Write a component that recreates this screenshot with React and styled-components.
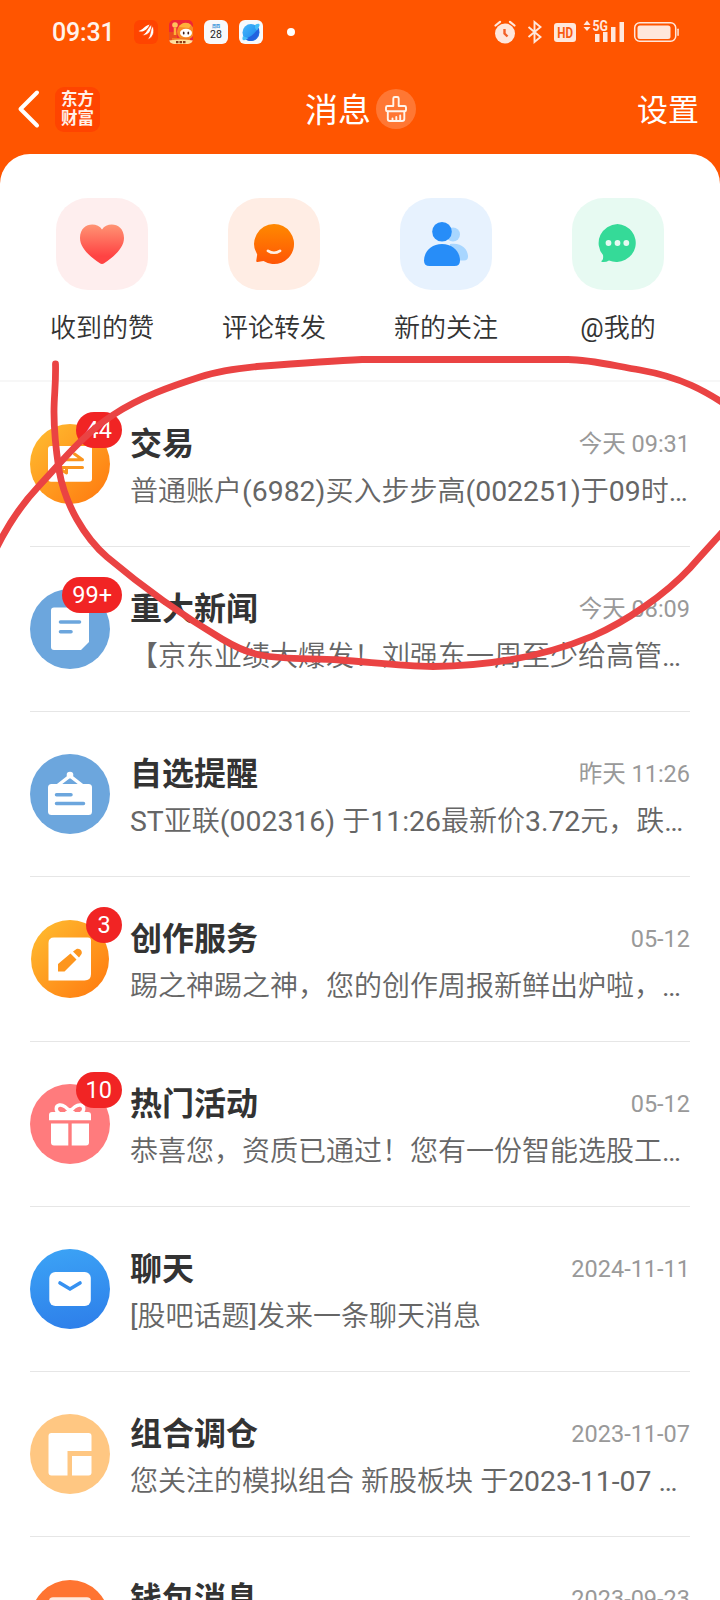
import styled, { createGlobalStyle } from "styled-components";

const shortcuts = [
  { label: "收到的赞", color: "#feeeee", icon: <HeartIcon /> },
  { label: "评论转发", color: "#ffede4", icon: <CommentIcon /> },
  { label: "新的关注", color: "#e7f2fe", icon: <PeopleIcon /> },
  { label: "@我的", color: "#e7faf2", icon: <MentionIcon /> },
];

const messages = [
  {
    title: "交易",
    date: "今天 09:31",
    text: "普通账户(6982)买入步步高(002251)于09时…",
    badge: "44",
    color: "linear-gradient(135deg, #ffb42c 15%, #ff8213 85%)",
    icon: <TradeIcon />,
  },
  {
    title: "重大新闻",
    date: "今天 08:09",
    text: "【京东业绩大爆发！刘强东一周至少给高管…",
    badge: "99+",
    color: "#6ca6dd",
    icon: <NewsIcon />,
  },
  {
    title: "自选提醒",
    date: "昨天 11:26",
    text: "ST亚联(002316) 于11:26最新价3.72元，跌…",
    color: "#6ca6dd",
    icon: <BoardIcon />,
  },
  {
    title: "创作服务",
    date: "05-12",
    text: "踢之神踢之神，您的创作周报新鲜出炉啦，…",
    badge: "3",
    small: true,
    color: "linear-gradient(135deg, #ffb42c 15%, #ff8213 85%)",
    icon: <WriteIcon />,
  },
  {
    title: "热门活动",
    date: "05-12",
    text: "恭喜您，资质已通过！您有一份智能选股工…",
    badge: "10",
    color: "#ff7b7d",
    icon: <GiftIcon />,
  },
  {
    title: "聊天",
    date: "2024-11-11",
    text: "[股吧话题]发来一条聊天消息",
    color: "linear-gradient(170deg, #3ca4f6, #2d7de9)",
    icon: <MailIcon />,
  },
  {
    title: "组合调仓",
    date: "2023-11-07",
    text: "您关注的模拟组合 新股板块 于2023-11-07 …",
    color: "#ffc782",
    icon: <LayoutIcon />,
  },
  {
    title: "钱包消息",
    date: "2023-09-23",
    text: "",
    small: true,
    color: "#ff7431",
    icon: <WalletIcon />,
  },
];

const strokes = [
  "M-6 553C5 530 20 506 38 487C58 466 82 435 113 415C140 397 172 386 200 377C218 371 236 368.500 257 366.500C290 364 330 361 362 359.500H568C590 359.500 615 366 640 370C680 377 705 390 735 411",
  "M735 518C720 535 705 551 690 568C665 595 625 622 593 636C545 656 490 666 433 666.500C400 666 370 662 340 660C310 658 285 660 260 655C245 652 232 645 222 639C190 620 145 589 107 557C85 538 65 505 59 470C56 450 54 430 54 412C54 395 56 385 55.500 364",
];

export default function App() {
  return (
    <Page>
      <GlobalStyle />
      <StatusBar>
        <Clock>09:31</Clock>
        <AppIcons>
          <EastmoneyMini />
          <MascotMini />
          <CalendarTile>
            <small>周四</small>
            <span>28</span>
          </CalendarTile>
          <BrowserMini />
        </AppIcons>
        <Dot />
        <SystemIcons />
      </StatusBar>
      <NavBar>
        <svg width="24" height="40" viewBox="0 0 24 40">
          <path d="M20 3.500L3.500 20L20 36.500" fill="none" stroke="#fff" strokeWidth="4" strokeLinecap="round" strokeLinejoin="round" />
        </svg>
        <Logo>
          <span>东方</span>
          <span>财富</span>
        </Logo>
        <Heading>
          <h1>消息</h1>
          <CleanButton>
            <BrushIcon />
          </CleanButton>
        </Heading>
        <Settings>设置</Settings>
      </NavBar>
      <Panel>
        <Shortcuts>
          {shortcuts.map((item) => (
            <Shortcut key={item.label}>
              <Tile $color={item.color}>{item.icon}</Tile>
              <p>
                <Mixed text={item.label} />
              </p>
            </Shortcut>
          ))}
        </Shortcuts>
        <List>
          {messages.map((item) => (
            <Row key={item.title}>
              <IconBox>
                <Avatar $color={item.color} $small={item.small}>
                  {item.icon}
                </Avatar>
                {item.badge && <Badge>{item.badge}</Badge>}
              </IconBox>
              <Content>
                <Line>
                  <h2>{item.title}</h2>
                  <time>{item.date}</time>
                </Line>
                <p>
                  <Mixed text={item.text} />
                </p>
              </Content>
            </Row>
          ))}
        </List>
      </Panel>
      <Marker width="720" height="1600" viewBox="0 0 720 1600">
        {strokes.map((d) => (
          <path key={d} d={d} />
        ))}
      </Marker>
    </Page>
  );
}

// Hanzi are set in a lighter weight than the latin and digits between them
function Mixed({ text }) {
  return text
    .split(/([\u3000-\uffef]+)/)
    .map((part, i) => (i % 2 ? <Hanzi key={i}>{part}</Hanzi> : part));
}

function EastmoneyMini() {
  return (
    <svg width="24" height="24" viewBox="0 0 24 24">
      <rect width="24" height="24" rx="6" fill="#ff4400" />
      <path d="M4.500 11C9 10 10 6 15.500 4.500C14 9 9 13 4.500 11Z" fill="#fff" />
      <path d="M8.500 15C13 13 13 8 17.500 4.800C18.500 10 14 16.500 8.500 15Z" fill="#fff" stroke="#ff4400" strokeWidth="0.700" />
      <path d="M13.500 19.500C17 16 16 9.500 18.500 6C21.500 11 19 18.500 13.500 19.500Z" fill="#fff" stroke="#ff4400" strokeWidth="0.700" />
    </svg>
  );
}

function MascotMini() {
  return (
    <svg width="24" height="24" viewBox="0 0 24 24">
      <clipPath id="mascot">
        <rect width="24" height="24" rx="5" />
      </clipPath>
      <g clipPath="url(#mascot)">
        <rect width="24" height="24" fill="#ee2737" />
        <path d="M0 12H8V24H0Z" fill="#e94f1d" />
        <circle cx="16.500" cy="11.500" r="8.500" fill="#f88b25" />
        <path d="M10 7C12 3 18 1 22 5L20 8Z" fill="#ffb13b" />
        <circle cx="6" cy="5" r="2.800" fill="#ffc35c" />
        <path d="M6 8V15" stroke="#ffb13b" strokeWidth="2.500" />
        <ellipse cx="17" cy="13" rx="6" ry="4.200" fill="#fff" />
        <ellipse cx="14.700" cy="13" rx="0.900" ry="1.500" fill="#442018" />
        <ellipse cx="19.300" cy="13" rx="0.900" ry="1.500" fill="#442018" />
        <path d="M3 18H21V21H3Z" fill="#f47a20" />
        <path d="M0 20.500Q12 18.500 24 20.500V24H0Z" fill="#ffdf9b" />
        <path d="M7 22.200H17" stroke="#8c3b18" strokeWidth="2.200" strokeDasharray="2.500 1" />
      </g>
    </svg>
  );
}

function BrowserMini() {
  return (
    <svg width="24" height="24" viewBox="0 0 24 24">
      <defs>
        <linearGradient id="browser" x1="0" y1="0" x2="1" y2="1">
          <stop offset="0" stopColor="#45b8fa" />
          <stop offset="0.55" stopColor="#2b9af4" />
          <stop offset="1" stopColor="#2463dd" />
        </linearGradient>
      </defs>
      <rect width="24" height="24" rx="6" fill="#f7f9fc" />
      <circle cx="12" cy="12.500" r="8.500" fill="url(#browser)" />
      <path d="M6 18.700C12 17 17.500 12 19.500 7.500C22 12 18 20 12 21C9 21 7.500 20.300 6 18.700Z" fill="#2263df" />
      <path d="M16 5C18.500 3.300 21 3.300 20.500 5.500C19.800 7.500 19 9 18 10.500L16 8ZM4 16C3 18.500 3.200 20.500 5 20.300C6.500 20 8 19 9.500 18L6 17Z" fill="#43bdf8" />
    </svg>
  );
}

function SystemIcons() {
  return (
    <svg width="190" height="28" viewBox="490 18 190 28" fill="#ffe7dc">
      <circle cx="505" cy="33.500" r="10" />
      <path d="M495.500 25.500L500 21.800M514.500 25.500L510 21.800" stroke="#ffe7dc" strokeWidth="2.200" strokeLinecap="round" />
      <path d="M504.500 29V33.500L507.500 36.500" fill="none" stroke="#f26128" strokeWidth="2.400" />
      <path d="M528.500 27L540.500 37L534.500 42V22L540.500 27L528.500 37" fill="none" stroke="#ffe7dc" strokeWidth="1.900" />
      <rect x="554" y="23" width="22" height="19" rx="3" />
      <text transform="translate(557.300 38) scale(0.900 1.120)" fontFamily="Roboto, sans-serif" fontSize="13.500" fontWeight="700" textLength="17.500" lengthAdjust="spacingAndGlyphs" fill="#f95a10">HD</text>
      <path d="M587 20.500L590.500 25H583.500ZM587 31L590.500 27H583.500Z" />
      <path d="M595 34H599.500V42H595ZM603 32H607.500V42H603ZM611 27H615.500V42H611ZM619.500 22H624V42H619.500Z" />
      <text x="592.500" y="31" fontFamily="Roboto, sans-serif" fontSize="14" fontWeight="700" textLength="15.500" lengthAdjust="spacingAndGlyphs">5G</text>
      <rect x="634.700" y="22.700" width="41" height="18.600" rx="5" fill="none" stroke="#ffe7dc" strokeWidth="1.500" />
      <rect x="637.500" y="25.500" width="33" height="13.500" rx="2.500" />
      <rect x="677.300" y="28.500" width="1.500" height="7.500" rx="0.700" />
    </svg>
  );
}

function BrushIcon() {
  return (
    <svg width="24" height="28" viewBox="0 0 24 28" fill="none" stroke="#fff5ec" strokeWidth="1.900" strokeLinejoin="round" strokeLinecap="round">
      <path d="M9.300 11V3.500Q9.300 2 10.800 2H13.200Q14.700 2 14.700 3.500V11H20.500Q22 11 22 12.500V15Q22 16.300 20.500 16.300H3.500Q2 16.300 2 15V12.500Q2 11 3.500 11Z" />
      <path d="M3.800 16.500V24Q3.800 26 5.800 26H18Q20.300 26 20.300 24V16.500M8.500 25.500V23.500M12.300 25.500V22M16.200 25.500V20.500" />
    </svg>
  );
}

function HeartIcon() {
  return (
    <svg width="92" height="92" viewBox="0 0 92 92">
      <defs>
        <linearGradient id="heart" x1="0" y1="0" x2="0" y2="1">
          <stop offset="0" stopColor="#ff9474" />
          <stop offset="0.8" stopColor="#ff4343" />
        </linearGradient>
      </defs>
      <path d="M46 31.500C51 23.500 68 24.500 68 40C68 50 58 58.500 48.500 65Q46 67 43.500 65C34 58.500 24 50 24 40C24 24.500 41 23.500 46 31.500Z" fill="url(#heart)" />
    </svg>
  );
}

function CommentIcon() {
  return (
    <svg width="92" height="92" viewBox="0 0 92 92">
      <defs>
        <linearGradient id="comment" x1="0" y1="0" x2="0" y2="1">
          <stop offset="0" stopColor="#ff8900" />
          <stop offset="1" stopColor="#ff5606" />
        </linearGradient>
      </defs>
      <path d="M46 26A20 20 0 1 1 35.500 63L29.500 64Q28 64.300 28.300 62.500L29.200 56.500A20 20 0 0 1 46 26Z" fill="url(#comment)" />
      <path d="M40 52.800Q46 56.700 52 52.800" stroke="#fff0e7" strokeWidth="2.700" strokeLinecap="round" fill="none" />
    </svg>
  );
}

function PeopleIcon() {
  return (
    <svg width="92" height="92" viewBox="0 0 92 92">
      <circle cx="53" cy="36.500" r="7" fill="#a8d6ff" />
      <path d="M50 46C61 44 68 51 68 58.500Q68 62.500 64 62.500H50Z" fill="#a8d6ff" />
      <circle cx="42" cy="33.700" r="9.800" fill="#278df8" />
      <path d="M42 46C53 46 60 54 60 62.500Q60 68 54.500 68H29.500Q24 68 24 62.500C24 54 31 46 42 46Z" fill="#278df8" />
    </svg>
  );
}

function MentionIcon() {
  return (
    <svg width="92" height="92" viewBox="0 0 92 92">
      <path d="M45.500 26A19.500 19 0 1 1 37 62.600Q34 64.500 30 64Q28.500 63.500 30.500 62Q31.500 60.500 31 57A19.500 19 0 0 1 45.500 26Z" fill="#35da98" />
      <g fill="#e7faf2">
        <circle cx="36.500" cy="45" r="2.900" />
        <circle cx="45.500" cy="45" r="2.900" />
        <circle cx="54.300" cy="45" r="2.900" />
      </g>
    </svg>
  );
}

function TradeIcon() {
  return (
    <svg width="80" height="80" viewBox="0 0 80 80">
      <rect x="18" y="22" width="44" height="35.700" rx="3" fill="#fff" />
      <path d="M27 35.700H52.500L44.500 30M52.500 43.500H27.500L36.500 49V43.500" fill="none" stroke="#fa951e" strokeWidth="3" strokeLinecap="round" strokeLinejoin="round" />
    </svg>
  );
}

function NewsIcon() {
  return (
    <svg width="80" height="80" viewBox="0 0 80 80">
      <path d="M24 18.500H56Q59 18.500 59 21.500V53L51 61H24Q21 61 21 58V21.500Q21 18.500 24 18.500Z" fill="#fff" />
      <path d="M30.500 33H49.500M30.500 42.700H41" stroke="#6ca6dd" strokeWidth="3.600" strokeLinecap="round" />
    </svg>
  );
}

function BoardIcon() {
  return (
    <svg width="80" height="80" viewBox="0 0 80 80">
      <path d="M27 32L40 22L53 32" fill="none" stroke="#fff" strokeWidth="3.400" />
      <circle cx="40" cy="21" r="3.300" fill="#fff" />
      <rect x="18" y="30" width="44" height="31" rx="3.500" fill="#fff" />
      <path d="M26.500 40.700H41M26.500 49.500H53.500" stroke="#6ca6dd" strokeWidth="3.500" strokeLinecap="round" />
    </svg>
  );
}

function WriteIcon() {
  return (
    <svg width="80" height="80" viewBox="0 0 80 80">
      <path d="M24 18.500H58Q61 18.500 61 21.500V55Q61 61.500 54.500 61.500H18.500V24Q18.500 18.500 24 18.500Z" fill="#fff" />
      <path d="M28 45L40.500 34.500L46.500 40.500L34.500 52.500H28ZM43 32.500L46.500 30C49.500 28.500 53 32 51.500 35L49 38.500Z" fill="#fd961e" />
    </svg>
  );
}

function GiftIcon() {
  return (
    <svg width="80" height="80" viewBox="0 0 80 80">
      <path d="M40 28C36.500 23 33 20.500 29.500 21C25 22 25.500 27 29 29M40 28C43.500 23 47 20.500 50.500 21C55 22 54.500 27 51 29M36 29L40 26L44 29" fill="none" stroke="#fff" strokeWidth="3.400" />
      <path d="M22 28H58Q61 28 61 31V36.300H19V31Q19 28 22 28Z" fill="#fff" />
      <path d="M21 39.500H38.300V61.500H24Q21 61.500 21 58.500ZM41.700 39.500H59V58.500Q59 61.500 56 61.500H41.700Z" fill="#fff" />
    </svg>
  );
}

function MailIcon() {
  return (
    <svg width="80" height="80" viewBox="0 0 80 80">
      <rect x="19.300" y="23" width="41.500" height="34" rx="6" fill="#fff" />
      <path d="M30 34L40 40L50 34" fill="none" stroke="#3691f1" strokeWidth="3.600" strokeLinecap="round" />
    </svg>
  );
}

function LayoutIcon() {
  return (
    <svg width="80" height="80" viewBox="0 0 80 80" fill="#fff">
      <path d="M21.500 19H58.500Q61.500 19 61.500 22V37H37.500V61.500H21.500Q18.500 61.500 18.500 58.500V22Q18.500 19 21.500 19Z" />
      <path d="M42 42H61.500V58.500Q61.500 61.500 58.500 61.500H42Z" />
    </svg>
  );
}

function WalletIcon() {
  return (
    <svg width="80" height="80" viewBox="0 0 80 80">
      <rect x="19" y="18.300" width="42" height="42" rx="4" fill="#ffe8dc" />
    </svg>
  );
}

const GlobalStyle = createGlobalStyle`
  * {
    box-sizing: border-box;
    margin: 0;
    padding: 0;
  }

  body {
    width: 720px;
    height: 1600px;
    overflow: hidden;
    background: #ff5500;
    font-family: Roboto, "Noto Sans CJK SC", sans-serif;
  }

  svg {
    display: block;
    flex-shrink: 0;
  }
`;

const Page = styled.div`
  position: relative;
  display: flex;
  flex-direction: column;
  width: 720px;
  height: 1600px;
  overflow: hidden;
  background: #ff5500;
`;

const StatusBar = styled.header`
  display: flex;
  align-items: center;
  height: 64px;
  padding-left: 52px;
`;

const Clock = styled.span`
  width: 82px;
  padding-top: 2px;
  font-size: 25px;
  line-height: 30px;
  font-weight: 500;
  letter-spacing: -0.2px;
  color: #fff3ec;
`;

const AppIcons = styled.div`
  display: flex;
  gap: 11px;
`;

const CalendarTile = styled.div`
  display: flex;
  flex-direction: column;
  align-items: center;
  width: 24px;
  height: 24px;
  padding-top: 4px;
  border-radius: 6px;
  background: #f8f9fb;

  small {
    font-size: 4px;
    line-height: 5px;
    font-weight: 700;
    color: #248cd6;
  }

  span {
    font-size: 10.5px;
    line-height: 12px;
    color: #222;
  }
`;

const Dot = styled.i`
  width: 8px;
  height: 8px;
  margin: 0 195px 0 24px;
  border-radius: 50%;
  background: #fff;
`;

const NavBar = styled.nav`
  display: flex;
  align-items: center;
  height: 90px;
  padding: 0 21px 0 17px;
`;

const Logo = styled.div`
  display: flex;
  flex-direction: column;
  align-items: center;
  justify-content: center;
  width: 45px;
  height: 45px;
  margin-left: 14px;
  border-radius: 9px;
  background: #ff4400;

  span {
    font-size: 16.5px;
    line-height: 19px;
    font-weight: 700;
    color: #fff0e8;
  }
`;

const Heading = styled.div`
  display: flex;
  flex: 1;
  align-items: center;
  gap: 5px;
  padding-left: 205px;

  h1 {
    padding-top: 4px;
    font-size: 33px;
    line-height: 44px;
    font-weight: 400;
    color: #fff;
  }
`;

const CleanButton = styled.button`
  display: flex;
  align-items: center;
  justify-content: center;
  width: 40px;
  height: 40px;
  border: none;
  border-radius: 50%;
  background: #ff7733;
`;

const Settings = styled.span`
  padding-top: 4px;
  font-size: 31px;
  line-height: 44px;
  color: #fff;
`;

const Panel = styled.main`
  flex: 1;
  min-height: 0;
  border-radius: 30px 30px 0 0;
  background: #fff;
`;

const Shortcuts = styled.section`
  display: flex;
  height: 228px;
  padding: 44px 16px 0;
  border-bottom: 2px solid #f7f7f7;
`;

const Shortcut = styled.div`
  display: flex;
  flex: 1;
  flex-direction: column;
  align-items: center;

  p {
    margin-top: 17px;
    font-size: 26px;
    line-height: 38px;
    color: #333;
  }
`;

const Tile = styled.div`
  width: 92px;
  height: 92px;
  border-radius: 32px;
  background: ${(props) => props.$color};
`;

const List = styled.section`
  padding: 0 30px;
`;

const Row = styled.article`
  display: flex;
  gap: 20px;
  height: 165px;
  padding-top: 42px;
  border-bottom: 1px solid #e6e6e6;
`;

const IconBox = styled.div`
  position: relative;
  display: flex;
  align-items: center;
  justify-content: center;
  width: 80px;
  height: 80px;
`;

const Avatar = styled.div`
  display: flex;
  align-items: center;
  justify-content: center;
  width: ${(props) => (props.$small ? 78 : 80)}px;
  height: ${(props) => (props.$small ? 78 : 80)}px;
  border-radius: 50%;
  background: ${(props) => props.$color};
`;

const Badge = styled.span`
  position: absolute;
  top: -12px;
  right: -12px;
  min-width: 36px;
  height: 36px;
  padding: 0 10px;
  border-radius: 18px;
  background: #f12424;
  font-size: 23.5px;
  line-height: 36px;
  text-align: center;
  color: #fff;
`;

const Content = styled.div`
  flex: 1;
  min-width: 0;

  p {
    height: 42px;
    margin-top: 3px;
    font-size: 28.4px;
    line-height: 42px;
    white-space: nowrap;
    color: #666;
  }

  p span {
    font-size: 28px;
  }
`;

const Hanzi = styled.span`
  font-family: "Noto Sans CJK SC", sans-serif;
  font-weight: 350;
`;

const Line = styled.div`
  display: flex;
  align-items: center;
  justify-content: space-between;
  margin-top: -1px;

  h2 {
    font-size: 32px;
    line-height: 42px;
    font-weight: 700;
    color: #333;
  }

  time {
    font-size: 23.5px;
    line-height: 42px;
    color: #999;
  }
`;

const Marker = styled.svg`
  position: absolute;
  inset: 0;
  pointer-events: none;
  fill: none;
  stroke: #ea4343;
  stroke-width: 6.8px;
  stroke-linecap: round;
`;
